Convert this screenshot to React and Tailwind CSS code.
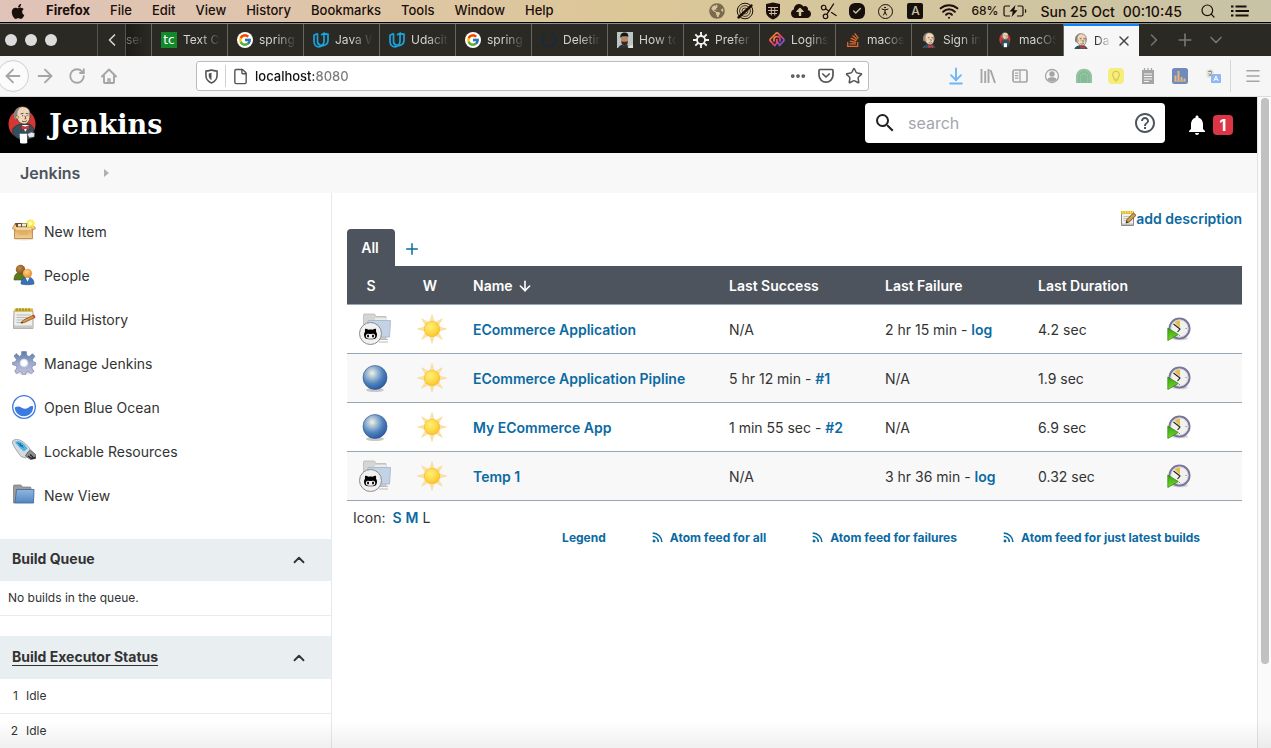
import React from 'react';
import { FaApple, FaGlobeAmericas, FaCloudUploadAlt, FaGithubAlt, FaStackOverflow } from 'react-icons/fa';
import { FcGoogle } from 'react-icons/fc';
import {
  ArrowLeft, ArrowRight, RotateCw, File, Star, Ellipsis, ChevronLeft, ChevronRight, ChevronDown, ChevronUp,
  Plus, X, Menu, Search, Wifi, Scissors, PersonStanding, Check, ArrowDown, ArrowDownToLine,
} from 'lucide-react';
import { MdNotifications, MdSearch, MdHelpOutline } from 'react-icons/md';

/* ---------- Shared drawings ---------- */

function SharedGradients() {
  return (
    <svg className="absolute h-0 w-0" aria-hidden="true">
      <defs>
        <radialGradient id="ball" cx="0.38" cy="0.32" r="0.7">
          <stop offset="0" stopColor="#f3f3dc" />
          <stop offset="0.3" stopColor="#a3bdd6" />
          <stop offset="0.65" stopColor="#4e80bb" />
          <stop offset="1" stopColor="#2a5ba3" />
        </radialGradient>
        <radialGradient id="sun" cx="0.4" cy="0.35" r="0.7">
          <stop offset="0" stopColor="#ffee7a" />
          <stop offset="0.6" stopColor="#fdd843" />
          <stop offset="1" stopColor="#f9bf2d" />
        </radialGradient>
        <linearGradient id="folderBlue" x1="0" y1="0" x2="0" y2="1">
          <stop offset="0" stopColor="#8fb6e0" />
          <stop offset="1" stopColor="#5585bf" />
        </linearGradient>
        <linearGradient id="gear" x1="0" y1="0" x2="0" y2="1">
          <stop offset="0" stopColor="#5a7ba8" />
          <stop offset="0.5" stopColor="#9ea9cb" />
          <stop offset="1" stopColor="#c4c4dd" />
        </linearGradient>
        <linearGradient id="box" x1="0" y1="0" x2="0" y2="1">
          <stop offset="0" stopColor="#d49c52" />
          <stop offset="1" stopColor="#f4cf8d" />
        </linearGradient>
        <radialGradient id="headBrown" cx="0.4" cy="0.35" r="0.7">
          <stop offset="0" stopColor="#c08a4c" />
          <stop offset="1" stopColor="#7c4c12" />
        </radialGradient>
        <radialGradient id="headOrange" cx="0.4" cy="0.35" r="0.7">
          <stop offset="0" stopColor="#ffd08a" />
          <stop offset="1" stopColor="#e58a22" />
        </radialGradient>
        <linearGradient id="play" x1="0" y1="0" x2="0" y2="1">
          <stop offset="0" stopColor="#3aa30f" />
          <stop offset="1" stopColor="#73d92b" />
        </linearGradient>
        <linearGradient id="fingerprint" x1="0" y1="0" x2="1" y2="1">
          <stop offset="0" stopColor="#ff9a2b" />
          <stop offset="0.5" stopColor="#f0426a" />
          <stop offset="1" stopColor="#4a5cff" />
        </linearGradient>
      </defs>
    </svg>
  );
}

function ButlerHead() {
  return (
    <g>
      <path d="M7.500 9C7 4.500 10 1 15 1c5 0 8 3 8 8 0 5-2 10-6 10-5 0-8-4-9.500-10z" fill="#f0d6b7" stroke="#3b3431" strokeWidth="0.700" />
      <path d="M15 1C10 1 6.500 4 6 9c-.5 3 .5 5 2 5.500L9.500 11l.5-5c1-3 3-4.500 5-5z" fill="#8b8480" />
      <path d="M21.500 6c1.500 1 2 4 1 7l-1-2z" fill="#8b8480" />
      <circle cx="9.500" cy="12" r="1.600" fill="#e9c6a2" stroke="#3b3431" strokeWidth="0.400" />
      <path d="M13 8.500l3-.5M18.500 8l2.500.4M14.500 10.400h1.200M19 10.400h1.200M17.500 10.500l1 3-1.300.2M14.500 16c1.500.8 3.500.6 5-.4" fill="none" stroke="#4a3a33" strokeWidth="0.900" />
    </g>
  );
}

function JenkinsLogo() {
  return (
    <svg viewBox="0 0 30 40" className="h-10 w-[29px]" aria-hidden="true">
      <ellipse cx="14.500" cy="19" rx="14" ry="15" fill="#d33833" />
      <path d="M5 24c2-3 5-4 8-5l9 0c3 1.500 4.500 4 5 7l-2 7c-5 3-12 3-16 0-3-2-5-5-4-9z" fill="#335061" stroke="#1d2b34" strokeWidth="0.700" />
      <path d="M14 20l4 7 4-7z" fill="#fff" />
      <ButlerHead />
      <path d="M13.500 20.500l4 1.500 4.500-1.500.5 4.500-4.500-1.500L14 25.500z" fill="#d33833" stroke="#651a19" strokeWidth="0.500" />
      <path d="M12 29h7.500l.5 9.500c-2.500 1-5 1-7.500 0z" fill="#fff" />
      <path d="M20 29.500l4-2 3.500 1-.5 4-5 .5z" fill="#e8e8e8" stroke="#777" strokeWidth="0.500" />
    </svg>
  );
}

function ButlerFavicon() {
  return (
    <svg viewBox="4 0 22 24" className="h-4 w-4 shrink-0" aria-hidden="true">
      <path d="M5 24c1-3 4-4.500 8-5.500h6c3 1 5 3 6 5.500z" fill="#335061" />
      <ButlerHead />
      <path d="M14 19l3.500 2 3.500-2v5l-3.500-1.200L14 24z" fill="#d33833" />
    </svg>
  );
}

function JenkinsFavicon() {
  return (
    <svg viewBox="0 0 30 40" className="h-4 w-4 shrink-0" aria-hidden="true">
      <ellipse cx="14.500" cy="19" rx="14" ry="15" fill="#d33833" />
      <path d="M5 24c2-3 5-4 8-5h9c3 1.500 4.500 4 5 7l-2 9c-5 3-12 3-16 0-3-2-5-7-4-11z" fill="#335061" />
      <ButlerHead />
      <path d="M12 28h8v10h-8z" fill="#fff" />
    </svg>
  );
}

function UdacityIcon() {
  return (
    <svg viewBox="0 0 16 16" className="h-4 w-4 shrink-0" fill="none" stroke="#1aa4dd" strokeWidth="1.700" aria-hidden="true">
      <path d="M4.500 1.500L1 3.200v6c0 3.600 2.300 5.600 5 5.600 1.200 0 2.300-.4 3.200-1" />
      <path d="M4.500 1.500v7.800c0 2.400 1.400 3.700 3 3.900M8 3l3-1.700V9c0 3-1.500 4.600-4 4.700M11 1.500l4 .8v6c0 3-2.200 5-5.500 5.500" />
    </svg>
  );
}

function TcIcon() {
  return (
    <span className="flex h-4 w-4 shrink-0 items-center justify-center bg-[#13892b] font-['DejaVu_Sans'] text-[12px] leading-none text-white">
      tc
    </span>
  );
}

function SpinnerIcon() {
  return (
    <svg viewBox="0 0 16 16" className="h-4 w-4 shrink-0" fill="none" stroke="#1b2a3a" strokeWidth="2" aria-hidden="true">
      <path d="M10 1.500a6.500 6.500 0 1 1-5 .3" />
    </svg>
  );
}

function PortraitIcon() {
  return (
    <svg viewBox="0 0 16 16" className="h-4 w-4 shrink-0" aria-hidden="true">
      <rect width="16" height="16" fill="#b9c6c5" />
      <path d="M1 16c1-2 2.500-3 4.500-3.500h4.500l3 3.500z" fill="#2a3038" />
      <path d="M4 3h7v6c0 3-1.500 5-3.500 5S4 11 4 8z" fill="#b98468" />
      <path d="M3.500 6c-.7-4 1.700-5.500 4.200-5.500 2.700 0 4 1.800 3.500 5L10.500 4.200H5z" fill="#1a1412" />
      <path d="M4.300 9.300l2 .4h2.400l2.200-.4c0 3-1.400 4.700-3.300 4.700S4.300 12 4.300 9.300z" fill="#3b2a22" />
      <path d="M10.500 14.500l5.500-2V16h-4.500z" fill="#e7dede" />
    </svg>
  );
}

function CogIcon() {
  return (
    <svg viewBox="0 0 16 16" className="h-4 w-4 shrink-0" fill="none" stroke="#f2f2f2" aria-hidden="true">
      <circle cx="8" cy="8" r="4" strokeWidth="1.800" />
      <path strokeWidth="1.900" d="M8 0v4M8 12v4M0 8h4M12 8h4M2.300 2.300l2.800 2.800M10.900 10.900l2.800 2.800M13.700 2.300l-2.800 2.800M5.100 10.900l-2.800 2.800" />
    </svg>
  );
}

function LoginsIcon() {
  return (
    <svg viewBox="0 0 16 16" className="h-4 w-4 shrink-0" fill="none" stroke="url(#fingerprint)" strokeWidth="1.700" strokeLinecap="round" strokeLinejoin="round" aria-hidden="true">
      <path d="M5.500 13.500L1.500 9.200c-.6-.7-.6-1.700 0-2.400L6.800 1.500c.7-.6 1.700-.6 2.400 0l5.300 5.300c.6.7.6 1.700 0 2.400l-4 4.300" />
      <path d="M5 9V7.500c0-4 6-4 6 0V9M8 7.500c.2 3-.5 4.500-2 6M8.500 10l2 3" />
    </svg>
  );
}

function OrangeStackIcon() {
  return <FaStackOverflow className="h-4 w-4 shrink-0 text-[#e66a2c]" aria-hidden="true" />;
}

/* ---------- macOS menu bar ---------- */

const menus = ['File', 'Edit', 'View', 'History', 'Bookmarks', 'Tools', 'Window', 'Help'];

function StatusItem({ label, children }) {
  return (
    <button type="button" aria-label={label} className="flex w-7 shrink-0 items-center justify-center">
      {children}
    </button>
  );
}

function MacMenuBar() {
  return (
    <div className="flex h-[22px] shrink-0 items-center overflow-hidden whitespace-nowrap bg-linear-to-r from-[#e0c3b9] via-[#dcc797] to-[#c8c3a6] text-[13px] font-medium text-[#1a0f0a]">
      <div className="flex items-center gap-5 pl-[10px]">
        <button type="button" aria-label="Apple menu"><FaApple className="h-[17px] w-4" /></button>
        <button type="button" className="font-bold">Firefox</button>
        {menus.map((m) => <button type="button" key={m}>{m}</button>)}
      </div>
      <div className="ml-auto flex items-center pr-[22px]">
        <StatusItem label="Network"><FaGlobeAmericas className="h-4 w-4 opacity-50" /></StatusItem>
        <StatusItem label="Do not track">
          <svg viewBox="0 0 18 18" className="h-[18px] w-[18px]" fill="none" stroke="currentColor" aria-hidden="true">
            <circle cx="9" cy="9" r="7.800" strokeWidth="1" />
            <circle cx="9" cy="9" r="5.400" strokeWidth="0.800" />
            <circle cx="9" cy="9" r="3" strokeWidth="0.700" />
            <path d="M2.500 15.500l13-12" strokeWidth="2.400" strokeLinecap="round" />
          </svg>
        </StatusItem>
        <StatusItem label="Shield">
          <svg viewBox="0 0 16 18" className="h-[18px] w-4" aria-hidden="true">
            <path d="M8 .5L15 2v8c0 3.500-3.500 6-7 7.500C4.500 16 1 13.500 1 10V2z" fill="currentColor" />
            <path d="M3 5.500h10M3 8.500h10M4 11.500h8M6.300 5v8.500M9.700 5v8.500" stroke="#cdb9a5" strokeWidth="1" />
          </svg>
        </StatusItem>
        <StatusItem label="Cloud upload"><FaCloudUploadAlt className="h-4 w-5" /></StatusItem>
        <StatusItem label="Clippings"><Scissors className="h-[18px] w-[18px] -rotate-12" strokeWidth={1.600} /></StatusItem>
        <StatusItem label="Skype">
          <span className="flex h-4 w-4 items-center justify-center rounded-[6px] bg-[#15100c] text-[#cdbfa5]"><Check className="h-[10px] w-[10px]" strokeWidth={3.500} /></span>
        </StatusItem>
        <StatusItem label="Accessibility">
          <span className="flex h-[15px] w-[15px] items-center justify-center rounded-full border border-current"><PersonStanding className="h-3 w-3" strokeWidth={2} /></span>
        </StatusItem>
        <button type="button" aria-label="Input source" className="flex w-8 shrink-0 items-center justify-center">
          <span className="flex h-4 w-4 items-center justify-center rounded-[2px] bg-[#15100c] text-[12px] leading-none text-[#cdc3a5]">A</span>
        </button>
        <button type="button" aria-label="Wi-Fi" className="flex w-9 shrink-0 items-center justify-center"><Wifi className="h-5 w-5" strokeWidth={2.400} /></button>
        <button type="button" className="flex items-center gap-1 pl-1 text-[12px]">
          68%
          <svg viewBox="0 0 24 14" className="h-[14px] w-6" fill="none" stroke="currentColor" strokeWidth="1.200" aria-hidden="true">
            <path d="M7 2H2.500C1.700 2 1 2.700 1 3.500v7c0 .8.700 1.500 1.500 1.500H7M14.500 2h4c.8 0 1.500.7 1.500 1.500v7c0 .8-.7 1.500-1.500 1.500H14" />
            <path d="M12.500 1L6.500 7.600h3.300L8.600 13l6-6.800h-3.300z" fill="currentColor" stroke="none" />
            <path d="M22 5.500c1 .5 1 2.500 0 3" />
          </svg>
        </button>
        <button type="button" className="flex gap-2 pl-[14px] text-[14px]"><span>Sun 25 Oct</span><span>00:10:45</span></button>
        <button type="button" aria-label="Spotlight" className="pl-[18px]"><Search className="h-4 w-4" strokeWidth={1.800} /></button>
        <button type="button" aria-label="Notification centre" className="pl-[15px]">
          <svg viewBox="0 0 18 12" className="h-3 w-[18px]" stroke="currentColor" strokeWidth="1.800" aria-hidden="true"><path d="M0 1.500h2.500M4.500 1.500h11M0 6h2.500M4.500 6H18M0 10.500h2.500M4.500 10.500h13" /></svg>
        </button>
      </div>
    </div>
  );
}

/* ---------- Browser chrome ---------- */

const Google = () => <span className="flex h-4 w-4 shrink-0 items-center justify-center rounded-full bg-white"><FcGoogle className="h-[14px] w-[14px]" /></span>;

const tabs = [
  { icon: TcIcon, label: 'Text C' },
  { icon: Google, label: 'spring' },
  { icon: UdacityIcon, label: 'Java W' },
  { icon: UdacityIcon, label: 'Udacit' },
  { icon: Google, label: 'spring' },
  { icon: SpinnerIcon, label: 'Deletin' },
  { icon: PortraitIcon, label: 'How to' },
  { icon: CogIcon, label: 'Prefer' },
  { icon: LoginsIcon, label: 'Logins' },
  { icon: OrangeStackIcon, label: 'macos' },
  { icon: ButlerFavicon, label: 'Sign in' },
  { icon: JenkinsFavicon, label: 'macOS' },
];

function TabStrip() {
  return (
    <div className="flex h-[33px] shrink-0 items-stretch overflow-hidden border-t border-[#8d8d88] bg-[#2a2923] text-[12px] text-[#d4d4d2]">
      <div className="flex w-[97px] shrink-0 items-center gap-2 pl-[5px]">
        <span className="h-3 w-3 rounded-full bg-[#dcdcdc]" />
        <span className="h-3 w-3 rounded-full bg-[#dcdcdc]" />
        <span className="h-3 w-3 rounded-full bg-[#dcdcdc]" />
      </div>
      <button type="button" aria-label="Scroll tabs left" className="flex w-7 shrink-0 items-center justify-center border-l border-[#55554f]"><ChevronLeft className="h-5 w-5" /></button>
      <button type="button" className="w-[26px] shrink-0 border-l border-[#55554f] bg-linear-to-r from-[#1d1c18] to-[#2a2923] text-left text-[#77776f]"><span className="mask-r-from-20%">ser</span></button>
      {tabs.map(({ icon: Icon, label }, i) => (
        <button type="button" key={i} className="flex w-[76px] shrink-0 items-center gap-[6px] border-l border-[#66665f] pl-[9px]">
          <Icon />
          <span className="w-[42px] whitespace-nowrap text-left mask-r-from-40% mask-r-to-90%">{label}</span>
        </button>
      ))}
      <div className="flex w-[76px] shrink-0 items-stretch border-l border-[#66665f]">
        <div className="flex flex-1 items-center gap-[5px] border-t-2 border-[#0a84ff] bg-[#f7f7f8] pl-[9px] text-[#333]">
          <ButlerFavicon />
          <span className="w-[17px] whitespace-nowrap mask-r-from-20%">Da</span>
          <button type="button" aria-label="Close tab"><X className="h-4 w-4 text-[#444]" strokeWidth={2.200} /></button>
        </div>
      </div>
      <div className="flex items-center text-[#777771]">
        <button type="button" aria-label="Scroll tabs right" className="flex w-[30px] justify-center"><ChevronRight className="h-5 w-5" strokeWidth={1.800} /></button>
        <button type="button" aria-label="New tab" className="flex w-[31px] justify-center"><Plus className="h-5 w-5" strokeWidth={2} /></button>
        <button type="button" aria-label="List all tabs" className="flex w-8 justify-center"><ChevronDown className="h-5 w-5" strokeWidth={2} /></button>
      </div>
    </div>
  );
}

function ToolButton({ label, children }) {
  return <button type="button" aria-label={label} className="flex h-8 w-8 shrink-0 items-center justify-center">{children}</button>;
}

function NavBar() {
  return (
    <div className="flex h-[41px] shrink-0 items-center border-b border-[#dcdcdc] bg-[#f6f6f7] text-[#a5a5a6]">
      <div className="-ml-[3px] flex items-center">
        <button type="button" aria-label="Back" className="flex h-8 w-8 items-center justify-center rounded-full border border-[#cfcfcf] bg-[#fbfbfb]"><ArrowLeft className="h-[22px] w-[22px] shrink-0" /></button>
        <ToolButton label="Forward"><ArrowRight className="h-[22px] w-[22px]" /></ToolButton>
        <ToolButton label="Reload"><RotateCw className="h-[18px] w-[18px]" strokeWidth={2.400} /></ToolButton>
        <ToolButton label="Home">
          <svg viewBox="0 0 16 16" className="h-4 w-4" fill="none" stroke="currentColor" strokeWidth="1.900" strokeLinejoin="round" strokeLinecap="round" aria-hidden="true">
            <path d="M1 8.500l7-7 7 7M3 8v6.200c0 .5.400.800.800.800h8.400c.4 0 .8-.3.800-.8V8" />
            <path d="M7 15v-4h2v4" strokeWidth="1.500" />
          </svg>
        </ToolButton>
      </div>
      <form className="ml-[71px] flex h-[30px] min-w-0 flex-1 items-center rounded-[3px] border border-[#bdbdbd] bg-white text-[#555]" onSubmit={(e) => e.preventDefault()}>
        <button type="button" aria-label="Tracking protection" className="flex h-[22px] w-[29px] items-center justify-center border-r border-[#d0d0d0]">
          <svg viewBox="0 0 14 16" className="h-[15px] w-[13px]" fill="none" stroke="currentColor" strokeWidth="1.700" aria-hidden="true">
            <path d="M7 1c2 .8 4 1 6 1.200V7c0 4-2.500 6.500-6 8-3.500-1.500-6-4-6-8V2.200C3 2 5 1.800 7 1z" />
            <path d="M7 4v8C5 11 4 9 4 7V4.700z" fill="currentColor" stroke="none" />
          </svg>
        </button>
        <button type="button" aria-label="Site information" className="flex w-[29px] justify-center"><File className="h-[17px] w-[17px]" /></button>
        <label htmlFor="address" className="sr-only">Address</label>
        <input id="address" defaultValue="localhost:8080" className="min-w-0 flex-1 bg-[linear-gradient(90deg,#111_59px,#7a7a7a_59px)] bg-clip-text pt-0.5 text-[13px] font-medium text-transparent caret-black outline-none" />
        <button type="button" aria-label="Page actions" className="flex w-7 justify-center">
          <Ellipsis className="h-[18px] w-[18px]" strokeWidth={3} />
        </button>
        <button type="button" aria-label="Save to Pocket" className="flex w-7 justify-center">
          <svg viewBox="0 0 16 16" className="h-4 w-4" fill="none" stroke="currentColor" strokeWidth="1.700" strokeLinecap="round" strokeLinejoin="round" aria-hidden="true">
            <path d="M2 1.500h12c.6 0 1 .4 1 1V7c0 4-3.200 7.200-7 7.200S1 11 1 7V2.500c0-.6.400-1 1-1z" />
            <path d="M4.800 6L8 9l3.200-3" />
          </svg>
        </button>
        <button type="button" aria-label="Bookmark" className="flex w-7 justify-center"><Star className="h-[18px] w-[18px]" /></button>
      </form>
      <div className="ml-[71px] flex items-center">
        <ToolButton label="Downloads"><ArrowDownToLine className="h-5 w-5 text-[#6fb5f7]" strokeWidth={2.300} /></ToolButton>
        <ToolButton label="Library">
          <svg viewBox="0 0 16 16" className="h-4 w-4" fill="none" stroke="currentColor" strokeWidth="1.900" aria-hidden="true"><path d="M1.500 1v14M5.200 3v12M8.500 1v14M10.500 2l4.500 13" /></svg>
        </ToolButton>
        <ToolButton label="Sidebars">
          <svg viewBox="0 0 16 14" className="h-[14px] w-4" fill="none" stroke="currentColor" strokeWidth="1.700" aria-hidden="true"><rect x="1" y="1" width="14" height="12" rx="1.800" /><path d="M8 1v12M3 4.200h3.300M3 6.700h3.300M3 9.200h3.300" strokeWidth="1.300" /></svg>
        </ToolButton>
        <ToolButton label="Account">
          <svg viewBox="0 0 16 16" className="h-4 w-4" aria-hidden="true"><circle cx="8" cy="8" r="6.500" fill="none" stroke="currentColor" strokeWidth="1.300" /><circle cx="8" cy="6" r="2.700" fill="currentColor" /><path d="M3.300 11.500c1-2 2.500-2.300 4.700-2.300s3.700.3 4.700 2.300C11.500 13 10 13.700 8 13.700s-3.500-.7-4.700-2.200z" fill="currentColor" /></svg>
        </ToolButton>
        <ToolButton label="Extension">
          <svg viewBox="0 0 16 16" className="h-4 w-4" aria-hidden="true"><path d="M0 15V8.500C0 4 3.500.800 8 .800S16 4 16 8.500V15z" fill="#93c4a2" /><path d="M3 15V9c0-3 2-5 5-5s5 2 5 5v6" fill="none" stroke="#6fa681" strokeWidth="1" strokeDasharray="1.200 1" /><path d="M5 15V9.500C5 7.500 6 6.500 8 6.500s3 1 3 3V15z" fill="#86bb98" /></svg>
        </ToolButton>
        <ToolButton label="Highlights">
          <svg viewBox="0 0 16 16" className="h-4 w-4" aria-hidden="true"><rect width="16" height="16" rx="4" fill="#f5ed7c" /><path d="M8 3.300a3.500 3.500 0 0 0-2 6.300v1.600h4V9.600a3.500 3.500 0 0 0-2-6.300zM6.500 12.800h3" fill="none" stroke="#d4c648" strokeWidth="1.100" /></svg>
        </ToolButton>
        <ToolButton label="Notes">
          <svg viewBox="0 0 14 16" className="h-4 w-[14px]" aria-hidden="true"><path d="M1 2h12v14H1z" fill="currentColor" /><path d="M3.500 0v3M7 0v3M10.500 0v3" stroke="currentColor" strokeWidth="1.300" /><path d="M3 6h8M3 8.500h8M3 11h8M3 13.500h5" stroke="#f6f6f7" strokeWidth="1.100" /></svg>
        </ToolButton>
        <ToolButton label="Statistics">
          <svg viewBox="0 0 16 16" className="h-4 w-4" aria-hidden="true"><rect width="16" height="16" rx="2.500" fill="#6d8bbb" /><path d="M3.500 13V7.500M6.500 13V3M9.500 13V9M12.500 13v-2.500" stroke="#f0b679" strokeWidth="1.900" /><path d="M2 13.200h12" stroke="#f0b679" strokeWidth="0.800" /></svg>
        </ToolButton>
        <button type="button" aria-label="Translate" className="flex h-8 w-[35px] items-center justify-center border-r border-[#d6d6d6]">
          <svg viewBox="0 0 16 16" className="h-4 w-4" aria-hidden="true"><path d="M1 2l7-1 2 8-8 1z" fill="#e6e6da" /><path d="M3 3.500h4M5 2v2M3.500 8c2-1 3-2.500 3.200-4M3.500 5.500C4.500 7 6 8 7.500 8" fill="none" stroke="#8a8a8a" strokeWidth="0.900" /><rect x="6" y="6" width="10" height="9" rx="1" fill="#8fb6f5" /><path d="M8.800 13L11 8l2.200 5M9.500 11.300h3" fill="none" stroke="#fff" strokeWidth="1" /></svg>
        </button>
        <button type="button" aria-label="Open menu" className="flex h-8 w-10 items-center justify-center pl-[3px]"><Menu className="h-[18px] w-[18px]" strokeWidth={2.200} /></button>
      </div>
    </div>
  );
}

/* ---------- Jenkins page ---------- */

function PageHeader() {
  return (
    <header className="flex h-14 shrink-0 items-center bg-black pl-2 pr-6">
      <a href="#home" className="flex items-center gap-3 text-white">
        <JenkinsLogo />
        <span className="font-['DejaVu_Serif'] text-[27px] font-bold leading-8">Jenkins</span>
      </a>
      <form className="mb-1 ml-auto flex h-10 w-[300px] items-center rounded-[4px] bg-white px-2" onSubmit={(e) => e.preventDefault()}>
        <MdSearch className="h-6 w-6 text-[#222]" aria-hidden="true" />
        <label htmlFor="search" className="sr-only">Search</label>
        <input id="search" placeholder="search" className="ml-[11px] min-w-0 flex-1 bg-transparent text-[16px] text-[#333] outline-none placeholder:text-[#a3a6ac]" />
        <button type="button" aria-label="Search help"><MdHelpOutline className="h-6 w-6 text-[#4d545d]" /></button>
      </form>
      <button type="button" aria-label="Notifications" className="ml-5 flex items-center gap-1 text-white">
        <MdNotifications className="h-6 w-6" />
        <span className="flex h-5 w-5 items-center justify-center rounded-[4px] bg-[#dc3545] text-[16px] font-bold leading-none">1</span>
      </button>
    </header>
  );
}

const iconBox = 'h-6 w-6 shrink-0';

const NewItemIcon = () => (
  <svg viewBox="0 0 24 24" className={iconBox} aria-hidden="true">
    <ellipse cx="12" cy="20" rx="10" ry="1.500" fill="#e5e1dc" />
    <path d="M2.500 7h18v12.500h-18z" fill="url(#box)" stroke="#b57f3c" strokeWidth="0.800" />
    <path d="M3 4h17v4.500H3z" fill="#6f4c20" />
    <path d="M6 5h3v2.500H6zM10 4.500h4v3h-4zM15 5.500h3V8h-3z" fill="#ece9e2" />
    <path d="M3 4.500L.3 9.500l3.200 1.500 1-2.500M20 4.500l3.700 5-3.200 1.500-1-2.500" fill="#f0c98a" stroke="#b57f3c" strokeWidth="0.700" />
    <path d="M3.500 8.300h16v2.500h-16z" fill="#f6dba8" />
    <path d="M7 13h9M7 15h9" stroke="#d9a75f" strokeWidth="0.900" />
    <circle cx="18.500" cy="4.500" r="4" fill="#fdec3c" opacity="0.900" /><circle cx="18.500" cy="4.500" r="1.900" fill="#fffcc9" />
  </svg>
);
const PeopleIcon = () => (
  <svg viewBox="0 0 24 24" className={iconBox} aria-hidden="true">
    <path d="M2 17c0-5 2-7.500 6-7.500s6 3 6 7.500z" fill="#587a1e" stroke="#3f5a12" strokeWidth="0.600" />
    <circle cx="8.500" cy="6.500" r="4.700" fill="url(#headBrown)" />
    <path d="M9 21c0-5 2.500-7 6.500-7s6.500 2.500 6.500 7c-3.500 1-9.500 1-13 0z" fill="#3a70b8" stroke="#22508f" strokeWidth="0.600" />
    <path d="M13.500 14.200l2 4.500 2-4.500z" fill="#fff" />
    <circle cx="15.500" cy="10.300" r="4.600" fill="url(#headOrange)" />
  </svg>
);
const NotepadIcon = () => (
  <svg viewBox="0 0 24 24" className={iconBox} aria-hidden="true">
    <path d="M2 4h19v17.500H1.500z" fill="#eeeeec" stroke="#9a9a96" strokeWidth="0.900" />
    <path d="M2 18.500h19v3H1.500z" fill="#c6c6c2" />
    <path d="M4.500 8h14M4.500 10.500h12M4.500 13h10M4.500 15.500h6" stroke="#b9b9b5" strokeWidth="1" />
    <path d="M2.500 1.500h18.500v3H2.500z" fill="#d8b92a" />
    <path d="M5 1v3M8 1v3M11 1v3M14 1v3M17 1v3" stroke="#8f7a14" strokeWidth="1" />
    <path d="M9 16l2.500-3L21.500 8l1.500 2.500L12.500 15.500z" fill="#dc9538" stroke="#7d4a10" strokeWidth="0.700" />
    <path d="M20.500 8.500l1.500-.8 1.500 2.300-1.500.9z" fill="#d83a32" /><path d="M8.500 16.300l1.500-1.700 1 1.300z" fill="#333" />
  </svg>
);
const EditNoteIcon = () => (
  <svg viewBox="0 0 16 16" className="h-4 w-4 shrink-0" aria-hidden="true">
    <path d="M1.500 3h12v12.500h-12z" fill="#f1f1ef" stroke="#8a8a86" strokeWidth="1" />
    <path d="M2 13.500h11v1.500H2z" fill="#bdbdb9" />
    <path d="M3.500 6.500h7M3.500 8.500h5M3.500 10.500h4" stroke="#b9b9b5" strokeWidth="0.900" />
    <path d="M1 1h13v3H1z" fill="#dfbe2b" />
    <path d="M3 .5v3M5.500.5v3M8 .5v3M10.500.5v3M12.500.5v3" stroke="#f7e98b" strokeWidth="0.900" />
    <path d="M6 13l1-3.500L13.500 3 16 5.300 9.300 12z" fill="#d49b4a" stroke="#5b3a12" strokeWidth="0.800" />
    <path d="M6 13l.6-2 1.500 1.200z" fill="#222" />
  </svg>
);
const ManageIcon = () => (
  <svg viewBox="0 0 24 24" className={iconBox} aria-hidden="true">
    <ellipse cx="12" cy="21.500" rx="8" ry="2" fill="#e4e4e4" />
    <path d="M9.800.5h4.400l.6 4 2.400 1.100 3.300-2.800 2.400 2.400-2.500 3.500.9 2.200 2.500.6v2.400l-3 .8-1 2.300 2.200 3.200-2.600 2.500-3.300-2.200-2.100.9-.8 2.600h-2.600l-.8-2.600-2.100-.9-3.300 2.200L2.800 20l2.200-3.200-1-2.300-3.400-.8v-2.400l3-.6.9-2.200-2.500-3.500 2.300-2.400 3.200 2.800 1.800-1.100z" fill="url(#gear)" stroke="#7582ab" strokeWidth="0.700" />
    <circle cx="12" cy="12" r="4.300" fill="#dcdfef" /><circle cx="12" cy="12" r="3" fill="#fff" />
  </svg>
);
const OceanIcon = () => (
  <svg viewBox="0 0 24 24" className={iconBox} aria-hidden="true">
    <circle cx="12" cy="12" r="11.300" fill="#fff" stroke="#3b7be0" strokeWidth="1.300" />
    <path d="M2.700 12.500c3-1.500 5-1 7 .2 2.500 1.600 4.500 1.500 6.500 0 1.600-1.200 3.300-2 4.900-1.400C21.500 17.500 17 21.300 12 21.300c-5 0-9-3.800-9.300-8.800z" fill="#3b7be0" />
  </svg>
);
const UsbIcon = () => (
  <svg viewBox="0 0 24 24" className={iconBox} aria-hidden="true">
    <path d="M1 1.500C3 .2 6 .2 9 1.500c3 1.600 7 5.500 8.500 8L18 14l-4.500 5L9 17.500C5.500 13 2 8 .8 5 .3 3.500.3 2.200 1 1.500z" fill="#d4dae0" stroke="#8d9aa6" strokeWidth="0.800" />
    <path d="M3 2.800c2-1 4-.8 6 .3 2.500 1.400 5 4 6.500 6.500L12 12.500C8 9.500 5 6.500 3 2.800z" fill="#4db3e6" />
    <path d="M5.500 3.500l6 5M8.500 4l-.5 3M11 6.500l-3 .5" stroke="#17618f" strokeWidth="0.900" />
    <path d="M15.500 13.500l3-2.500 5 4.500v4l-5 1-5-3.500z" fill="#8d8f90" stroke="#4b4b4b" strokeWidth="0.700" />
    <path d="M18 15.500l3 2.500M16 17l3.500 2.500 4-1" stroke="#222" strokeWidth="1.300" fill="none" />
  </svg>
);
const FolderIcon = () => (
  <svg viewBox="0 0 24 24" className={iconBox} aria-hidden="true">
    <path d="M1.500 20V3c0-.6.400-1 1-1h6.500l1.500 2H18c.6 0 1 .4 1 1v3H5L3 20z" fill="#9c9c99" stroke="#757572" strokeWidth="0.700" />
    <path d="M4.500 6.500h17.500L21.500 20H3z" fill="url(#folderBlue)" stroke="#3f6da6" strokeWidth="0.900" />
  </svg>
);

const tasks = [
  { icon: NewItemIcon, label: 'New Item' },
  { icon: PeopleIcon, label: 'People' },
  { icon: NotepadIcon, label: 'Build History' },
  { icon: ManageIcon, label: 'Manage Jenkins' },
  { icon: OceanIcon, label: 'Open Blue Ocean' },
  { icon: UsbIcon, label: 'Lockable Resources' },
  { icon: FolderIcon, label: 'New View' },
];

function Sidebar() {
  return (
    <aside className="w-[332px] shrink-0 border-r border-[#e6e8ea] text-[#333]">
      <nav className="flex flex-col pb-[22px] pt-4 text-[14px]">
        {tasks.map(({ icon: Icon, label }) => (
          <a key={label} href="#task" className="flex h-11 items-center gap-2 pl-3"><Icon />{label}</a>
        ))}
      </nav>
      <section>
        <div className="flex h-[42px] items-center justify-between bg-[#e9eef1] pl-3 pr-[23px]">
          <h2 className="pb-[3px] text-[14px] font-bold">Build Queue</h2>
          <button type="button" aria-label="Collapse build queue"><ChevronUp className="h-[18px] w-[18px]" strokeWidth={2.400} /></button>
        </div>
        <p className="flex h-[35px] items-center border-b border-[#e9ecee] pl-2 text-[12px]">No builds in the queue.</p>
      </section>
      <section className="mt-5">
        <div className="flex h-[43px] items-center justify-between bg-[#e9eef1] pl-3 pr-[23px]">
          <h2 className="pb-[3px] text-[14px] font-bold"><a href="#executors" className="underline underline-offset-[3px]">Build Executor Status</a></h2>
          <button type="button" aria-label="Collapse executor status"><ChevronUp className="h-[18px] w-[18px]" strokeWidth={2.400} /></button>
        </div>
        <ul className="text-[12px]">
          {[1, 2].map((n) => (
            <li key={n} className="flex h-[35px] items-center gap-2 border-b border-[#e9ecee] pl-[10px]"><span className="w-2 text-right">{n}</span>Idle</li>
          ))}
        </ul>
      </section>
    </aside>
  );
}

const GithubFolderIcon = () => (
  <span className="relative block h-8 w-8">
    <svg viewBox="0 0 32 32" className="h-8 w-8" aria-hidden="true">
      <path d="M4.500 24V2c0-.6.400-1 1-1h10l1.500 2.500h10V26H6z" fill="#d5d5d3" stroke="#b9b9b7" strokeWidth="0.800" />
      <path d="M16 5h11v3H16z" fill="#ececea" />
      <path d="M9 7.500h22.500L30.500 24H8z" fill="#c3d2e4" stroke="#a7b8cd" strokeWidth="0.900" />
      <path d="M20 26.500h9M20 29h9" stroke="#bcbcba" strokeWidth="1.200" />
      <circle cx="11.500" cy="20.500" r="11" fill="#f1f1f1" stroke="#8b8b8b" strokeWidth="1" />
    </svg>
    <FaGithubAlt className="absolute left-[5px] top-[14px] h-[14px] w-[13px] text-black" aria-hidden="true" />
  </span>
);
const BallIcon = () => (
  <svg viewBox="0 0 32 32" className="h-8 w-8" aria-hidden="true">
    <ellipse cx="16" cy="28" rx="9" ry="2" fill="#c9c9c9" />
    <circle cx="16" cy="15.500" r="12" fill="url(#ball)" stroke="#28508a" strokeWidth="0.600" />
  </svg>
);
const SunIcon = () => (
  <svg viewBox="0 0 32 32" className="h-8 w-8" aria-hidden="true">
    <g fill="#fde3a0" stroke="#f6cf86" strokeWidth="0.500">
      {[0, 45, 90, 135, 180, 225, 270, 315].map((a) => (
        <path key={a} d="M16 1.500l2 7h-4z" transform={`rotate(${a} 16 16)`} />
      ))}
    </g>
    <circle cx="16" cy="16" r="7.800" fill="url(#sun)" stroke="#f3b63a" strokeWidth="0.600" />
  </svg>
);
const BuildIcon = () => (
  <svg viewBox="0 0 24 24" className="h-6 w-6" aria-hidden="true">
    <ellipse cx="13" cy="21.500" rx="8" ry="1.800" fill="#d2d2d2" />
    <circle cx="12.500" cy="11.500" r="10" fill="#f1f1ee" stroke="#77769a" strokeWidth="2" />
    <circle cx="12.500" cy="11.500" r="8.600" fill="none" stroke="#c9c9d4" strokeWidth="0.800" />
    <path d="M13 11L7.500 5.500c1.600-1.600 3.600-2 5.500-2z" fill="#e5bd4c" />
    <path d="M6.500 7l4.500 3.500 2 1.500-2.500 3" fill="none" stroke="#222" strokeWidth="1.100" />
    <path d="M18.500 11.500h1.200M12.500 18v1" stroke="#8d8d8d" strokeWidth="1" />
    <path d="M.8 11l10.500 6.500L.8 23.500z" fill="url(#play)" stroke="#2c7d0c" strokeWidth="0.700" />
  </svg>
);

const jobs = [
  { status: GithubFolderIcon, name: 'ECommerce Application', success: ['N/A'], failure: ['2 hr 15 min - ', 'log'], duration: '4.2 sec' },
  { status: BallIcon, name: 'ECommerce Application Pipline', success: ['5 hr 12 min - ', '#1'], failure: ['N/A'], duration: '1.9 sec' },
  { status: BallIcon, name: 'My ECommerce App', success: ['1 min 55 sec - ', '#2'], failure: ['N/A'], duration: '6.9 sec' },
  { status: GithubFolderIcon, name: 'Temp 1', success: ['N/A'], failure: ['3 hr 36 min - ', 'log'], duration: '0.32 sec' },
];

function When({ value: [text, link] }) {
  return <>{text}{link && <a href="#build" className="font-semibold text-[#0b6aa2]">{link}</a>}</>;
}

function JobTable() {
  return (
    <table className="w-full table-fixed border-collapse text-left text-[14px]">
      <colgroup>
        <col className="w-12" /><col className="w-[70px]" /><col /><col className="w-[156px]" /><col className="w-[153px]" /><col className="w-[129px]" /><col className="w-[83px]" />
      </colgroup>
      <thead>
        <tr className="h-[38px] border-b border-[#98a5b3] bg-[#4d545d] text-white">
          <th className="pt-0.5 text-center font-semibold">S</th>
          <th className="pt-0.5 text-center font-semibold">W</th>
          <th className="px-2 pt-0.5 font-semibold"><span className="flex items-center gap-1">Name <ArrowDown className="h-4 w-4" strokeWidth={2.400} /></span></th>
          <th className="px-2 pt-0.5 font-semibold">Last Success</th>
          <th className="px-2 pt-0.5 font-semibold">Last Failure</th>
          <th className="px-2 pt-0.5 font-semibold">Last Duration</th>
          <th><span className="sr-only">Build</span></th>
        </tr>
      </thead>
      <tbody>
        {jobs.map(({ status: Status, name, success, failure, duration }) => (
          <tr key={name} className="h-[49px] border-b border-[#98a5b3] even:bg-[#f8f8f8]">
            <td className="pl-3"><Status /></td>
            <td className="pl-[21px]"><SunIcon /></td>
            <td className="px-2 pt-0.5 font-semibold"><a href="#job" className="text-[#0b6aa2]">{name}</a></td>
            <td className="whitespace-nowrap px-2 pt-0.5"><When value={success} /></td>
            <td className="whitespace-nowrap px-2 pt-0.5"><When value={failure} /></td>
            <td className="px-2 pt-0.5">{duration}</td>
            <td className="px-2"><button type="button" aria-label={`Build ${name}`} className="block"><BuildIcon /></button></td>
          </tr>
        ))}
      </tbody>
    </table>
  );
}

const feeds = ['Atom feed for all', 'Atom feed for failures', 'Atom feed for just latest builds'];

const FeedIcon = () => (
  <svg viewBox="0 0 12 12" className="h-[11px] w-[11px]" fill="none" stroke="currentColor" strokeWidth="1.700" aria-hidden="true">
    <circle cx="2.200" cy="9.800" r="1.600" fill="currentColor" stroke="none" />
    <path d="M.8 5c3.500 0 6 2.500 6 6M.8 1.200c5.500 0 10 4.300 10 9.800" />
  </svg>
);

function MainPanel() {
  return (
    <main className="min-w-0 flex-1 px-[15px] pt-[15px] text-[#333]">
      <div className="mb-px flex h-5 items-center justify-end text-[14px] font-semibold text-[#0b6aa2]">
        <a href="#description" className="flex items-center"><EditNoteIcon />add description</a>
      </div>
      <div className="flex h-[37px] items-stretch text-[14px]">
        <a href="#all" className="flex w-12 items-center justify-center rounded-t-[4px] bg-[#4d545d] pr-0.5 font-semibold text-white">All</a>
        <a href="#new-view" aria-label="New view" className="flex w-[34px] items-center justify-center pt-0.5 text-[#0b6aa2]"><Plus className="h-[18px] w-[18px]" strokeWidth={2} /></a>
      </div>
      <JobTable />
      <div className="flex gap-1 pl-[6px] pt-[7px] text-[14px] leading-5">
        <span className="pr-[3px]">Icon:</span>
        <a href="#small" className="font-semibold text-[#0b6aa2]">S</a>
        <a href="#medium" className="font-semibold text-[#0b6aa2]">M</a>
        <span>L</span>
      </div>
      <div className="flex justify-end gap-[46px] pr-[42px] text-[12px] font-bold leading-5 text-[#0b6aa2]">
        <a href="#legend">Legend</a>
        {feeds.map((f) => (
          <a key={f} href="#feed" className="flex items-center gap-[7px]"><FeedIcon />{f}</a>
        ))}
      </div>
    </main>
  );
}

export default function App() {
  return (
    <div className="relative flex h-screen flex-col overflow-hidden bg-white font-['Inter','Liberation_Sans',sans-serif]">
      <SharedGradients />
      <div className="shrink-0 border-b border-black"><MacMenuBar /></div>
      <TabStrip />
      <NavBar />
      <div className="flex min-h-0 flex-1">
        <div className="flex min-w-0 flex-1 flex-col">
          <PageHeader />
          <nav className="flex h-10 shrink-0 items-center bg-[#f8f8f8] pl-5 text-[16px] font-semibold text-[#4d545d]">
            <a href="#root">Jenkins</a>
            <svg viewBox="0 0 5 8" className="ml-6 h-2 w-[5px]" aria-hidden="true"><path d="M0 0l5 4-5 4z" fill="#adb1b5" /></svg>
          </nav>
          <div className="flex min-h-0 flex-1">
            <Sidebar />
            <MainPanel />
          </div>
        </div>
        <div className="w-[14px] shrink-0 border-l border-[#e3e3e3] bg-[#fafafa] pl-[3px] pt-px">
          <div className="h-[87%] w-2 rounded-full bg-[#c1c1c1]" />
        </div>
      </div>
      <div className="pointer-events-none absolute inset-x-0 bottom-0 h-7 bg-linear-to-t from-black/6 to-transparent" />
    </div>
  );
}
